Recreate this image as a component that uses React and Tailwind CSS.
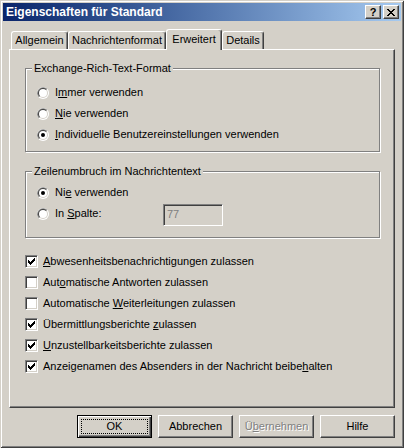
import React from 'react';

const font = "font-['Liberation_Sans',Arial,sans-serif]";

function Radio({ checked }) {
  return (
    <svg width="12" height="12" viewBox="0 0 12 12" className="shrink-0">
      <circle cx="6" cy="6" r="6" fill="#ffffff" />
      <path d="M1.76 10.24 A6 6 0 0 1 10.24 1.76 L6 6 Z" fill="#808080" />
      <circle cx="6" cy="6" r="5" fill="#d4d0c8" />
      <path d="M2.46 9.54 A5 5 0 0 1 9.54 2.46 L6 6 Z" fill="#404040" />
      <circle cx="6" cy="6" r="4" fill="#ffffff" />
      {checked && <circle cx="6" cy="6" r="2" fill="#000000" />}
    </svg>
  );
}

function Check({ checked }) {
  return (
    <span className="w-[13px] h-[13px] shrink-0 flex items-center justify-center bg-white border border-t-[#808080] border-l-[#808080] border-r-white border-b-white shadow-[inset_1px_1px_0_#404040,inset_-1px_-1px_0_#d4d0c8]">
      {checked && (
        <svg width="7" height="7" viewBox="0 0 7 7" shapeRendering="crispEdges">
          <path d="M0 2h1v3h-1z M1 3h1v3h-1z M2 4h1v3h-1z M3 3h1v3h-1z M4 2h1v3h-1z M5 1h1v3h-1z M6 0h1v3h-1z" fill="#000" />
        </svg>
      )}
    </span>
  );
}

function CapBtn({ children }) {
  return (
    <div className="w-[16px] h-[14px] bg-[#d4d0c8] flex items-center justify-center border border-t-white border-l-white border-r-[#404040] border-b-[#404040] shadow-[inset_-1px_-1px_0_#808080]">
      {children}
    </div>
  );
}

function Tab({ children, width, active }) {
  if (active) {
    return (
      <div className={`${width} h-[21px] -mb-px relative z-10 bg-[#d4d0c8] flex items-start justify-center pt-[3px] border-t border-l border-r border-t-white border-l-white border-r-[#404040] rounded-t-[3px] shadow-[inset_-1px_0_0_#808080]`}>
        {children}
      </div>
    );
  }
  return (
    <div className={`${width} h-[18px] flex items-center justify-center border-t border-l border-r border-t-white border-l-white border-r-[#404040] rounded-t-[3px] shadow-[inset_-1px_0_0_#808080]`}>
      {children}
    </div>
  );
}

function RadioRow({ checked, children }) {
  return (
    <div className="h-[21px] flex items-center gap-[6px]">
      <Radio checked={checked} />
      <span>{children}</span>
    </div>
  );
}

function CheckRow({ checked, children }) {
  return (
    <div className="h-[21px] flex items-center gap-[5px]">
      <Check checked={checked} />
      <span>{children}</span>
    </div>
  );
}

function Button({ children, isDefault, disabled }) {
  if (isDefault) {
    return (
      <div className="w-[75px] h-[23px] flex border border-black shadow-[inset_1px_1px_0_#ffffff,inset_-1px_-1px_0_#404040,inset_-2px_-2px_0_#808080]">
        <div className="flex-1 m-[3px] border border-dotted border-black flex items-center justify-center">
          {children}
        </div>
      </div>
    );
  }
  return (
    <div className={`w-[75px] h-[23px] flex items-center justify-center border border-t-white border-l-white border-r-[#404040] border-b-[#404040] shadow-[inset_-1px_-1px_0_#808080] ${disabled ? 'text-[#808080] text-shadow-[1px_1px_0_#ffffff]' : ''}`}>
      {children}
    </div>
  );
}

export default function App() {
  return (
    <div className={`${font} w-[404px] h-[448px] bg-[#d4d0c8] p-[3px] flex flex-col text-[11px] leading-[13px] text-black shadow-[inset_1px_1px_0_#d4d0c8,inset_-1px_-1px_0_#404040,inset_2px_2px_0_#ffffff,inset_-2px_-2px_0_#808080]`}>
      {/* title bar */}
      <div className="h-[18px] shrink-0 flex items-center bg-linear-to-r from-[#0a246a] to-[#a6caf0] pl-[3px] pr-[2px]">
        <span className="flex-1 text-white font-bold text-[12px] leading-none">Eigenschaften für Standard</span>
        <div className="flex gap-[2px]">
          <CapBtn>
            <span className="font-bold text-[11px] leading-none">?</span>
          </CapBtn>
          <CapBtn>
            <svg width="8" height="7" viewBox="0 0 8 7" shapeRendering="crispEdges">
              <path d="M0 0h2v1h-2z M6 0h2v1h-2z M1 1h2v1h-2z M5 1h2v1h-2z M2 2h4v1h-4z M3 3h2v1h-2z M2 4h4v1h-4z M1 5h2v1h-2z M5 5h2v1h-2z M0 6h2v1h-2z M6 6h2v1h-2z" fill="#000" />
            </svg>
          </CapBtn>
        </div>
      </div>

      {/* tabs + panel */}
      <div className="mx-[6px] mt-[8px] flex flex-col">
        <div className="h-[20px] flex items-end pl-[2px]">
          <Tab width="w-[57px]">Allgemein</Tab>
          <Tab width="w-[98px]">Nachrichtenformat</Tab>
          <Tab width="w-[56px]" active>Erweitert</Tab>
          <Tab width="w-[42px]">Details</Tab>
        </div>
        <div className="h-[359px] flex flex-col pl-[15px] border border-t-white border-l-white border-r-[#404040] border-b-[#404040] shadow-[inset_-1px_-1px_0_#808080]">
          <fieldset className="mt-[12px] w-[355px] h-[90px] border border-[#808080] shadow-[inset_1px_1px_0_#ffffff,1px_1px_0_#ffffff]">
            <legend className="ml-[6px] px-[2px] bg-[#d4d0c8] leading-[13px]">Exchange-Rich-Text-Format</legend>
            <div className="pl-[11px] pt-[7px] flex flex-col">
              <RadioRow>I<u>m</u>mer verwenden</RadioRow>
              <RadioRow><u>N</u>ie verwenden</RadioRow>
              <RadioRow checked><u>I</u>ndividuelle Benutzereinstellungen verwenden</RadioRow>
            </div>
          </fieldset>

          <fieldset className="mt-[13px] w-[355px] h-[73px] border border-[#808080] shadow-[inset_1px_1px_0_#ffffff,1px_1px_0_#ffffff]">
            <legend className="ml-[6px] px-[2px] bg-[#d4d0c8] leading-[13px]">Zeilenumbruch im Nachrichtentext</legend>
            <div className="pl-[11px] pt-[4px] flex flex-col">
              <RadioRow checked>Ni<u>e</u> verwenden</RadioRow>
              <div className="h-[21px] flex items-center gap-[6px]">
                <Radio />
                <span className="w-[102px]">In <u>S</u>palte:</span>
                <div className="w-[60px] h-[22px] mt-[2px] flex items-center pl-[3px] text-[#808080] bg-[#d4d0c8] border border-t-[#808080] border-l-[#808080] border-r-white border-b-white shadow-[inset_1px_1px_0_#404040,inset_-1px_-1px_0_#d4d0c8]">
                  77
                </div>
              </div>
            </div>
          </fieldset>

          <div className="mt-[13px] flex flex-col">
            <CheckRow checked><u>A</u>bwesenheitsbenachrichtigungen zulassen</CheckRow>
            <CheckRow>Aut<u>o</u>matische Antworten zulassen</CheckRow>
            <CheckRow>Automatische <u>W</u>eiterleitungen zulassen</CheckRow>
            <CheckRow checked>Übermittlungsberichte <u>z</u>ulassen</CheckRow>
            <CheckRow checked><u>U</u>nzustellbarkeitsberichte zulassen</CheckRow>
            <CheckRow checked>Anzeigenamen des Absenders in der Nachricht beibe<u>h</u>alten</CheckRow>
          </div>
        </div>
      </div>

      {/* buttons */}
      <div className="mt-[7px] mr-[6px] flex justify-end gap-[6px]">
        <Button isDefault>OK</Button>
        <Button>Abbrechen</Button>
        <Button disabled>Ü<u>b</u>ernehmen</Button>
        <Button>Hilfe</Button>
      </div>
    </div>
  );
}
